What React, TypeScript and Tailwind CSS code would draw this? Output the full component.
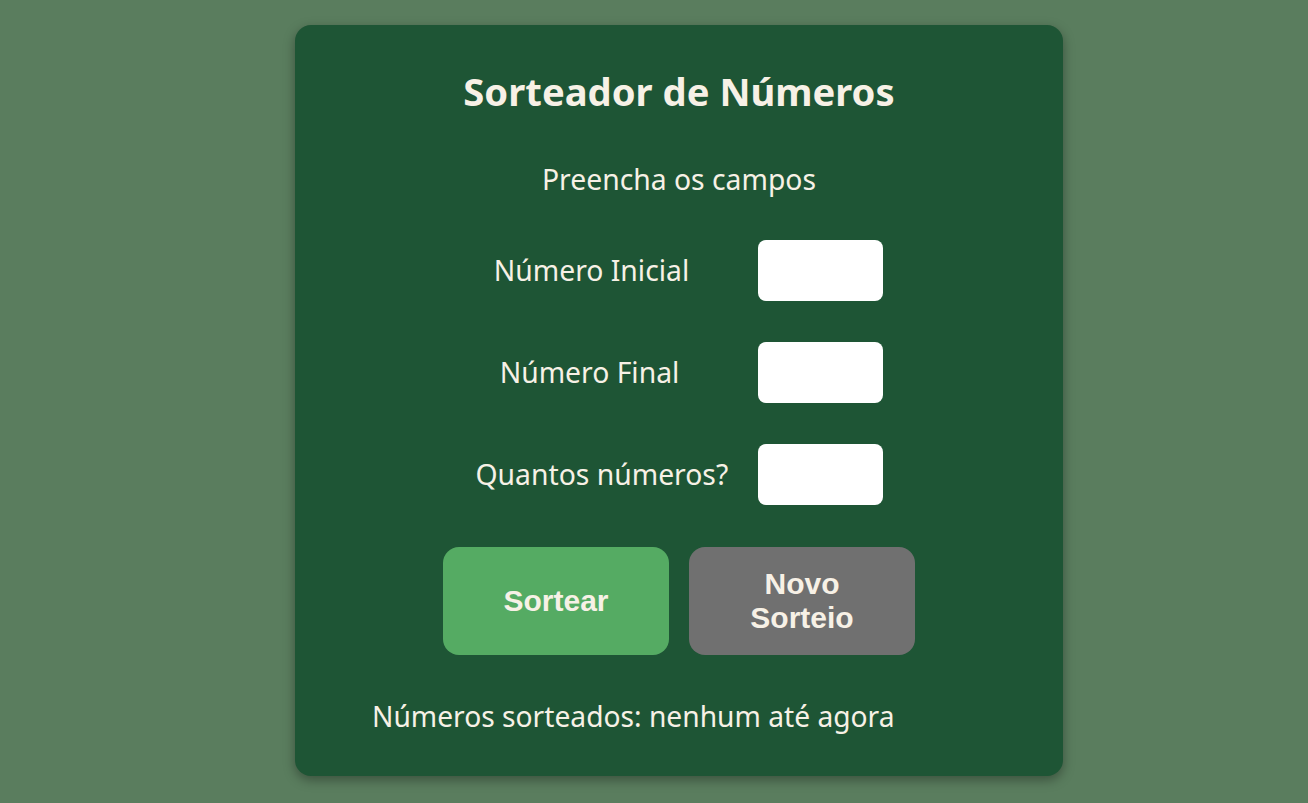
import React from "react";

export default function App() {
  return (
    <div className="min-h-[803px] w-full bg-[#5a7d5e] pt-[25px] pb-[27px] pl-[50px] font-['Noto_Sans',_sans-serif]">
      <div className="mx-auto flex w-[768px] flex-col items-center rounded-[16px] bg-[#1e5535] pt-[42px] pb-[44px] text-[#f7f1e6] shadow-[0_4px_12px_rgba(0,0,0,0.35)]">
        <h1 className="text-[38.2px] font-bold leading-[48px]">Sorteador de Números</h1>
        <p className="mt-[48px] text-[28.3px] leading-[32px]">Preencha os campos</p>
        <div className="mt-[45px] grid grid-cols-[252px_125px] gap-x-[30px] gap-y-[41px]">
          <label className="pr-[20px] text-center text-[28.3px] leading-[61px]">Número Inicial</label>
          <input className="h-[61px] w-[125px] rounded-[8px] bg-white outline-none" />
          <label className="pr-[24px] text-center text-[28.3px] leading-[61px]">Número Final</label>
          <input className="h-[61px] w-[125px] rounded-[8px] bg-white outline-none" />
          <label className="whitespace-nowrap text-center text-[28.3px] leading-[61px]">Quantos números?</label>
          <input className="h-[61px] w-[125px] rounded-[8px] bg-white outline-none" />
        </div>
        <div className="mt-[42px] flex items-stretch gap-[20px] font-['Liberation_Sans',_Arial,_sans-serif]">
          <button className="w-[226px] rounded-[16px] bg-[#55ab63] px-[20px] py-[20px] text-[30px] font-bold leading-[34px] text-[#f7f1e6]">
            Sortear
          </button>
          <button className="w-[226px] rounded-[16px] bg-[#707070] px-[20px] py-[20px] text-[30px] font-bold leading-[34px] text-[#f7f1e6]">
            Novo Sorteio
          </button>
        </div>
        <p className="mt-[45px] self-start whitespace-nowrap pl-[77px] text-[28.2px] leading-[32px]">
          Números sorteados: nenhum até agora
        </p>
      </div>
    </div>
  );
}
